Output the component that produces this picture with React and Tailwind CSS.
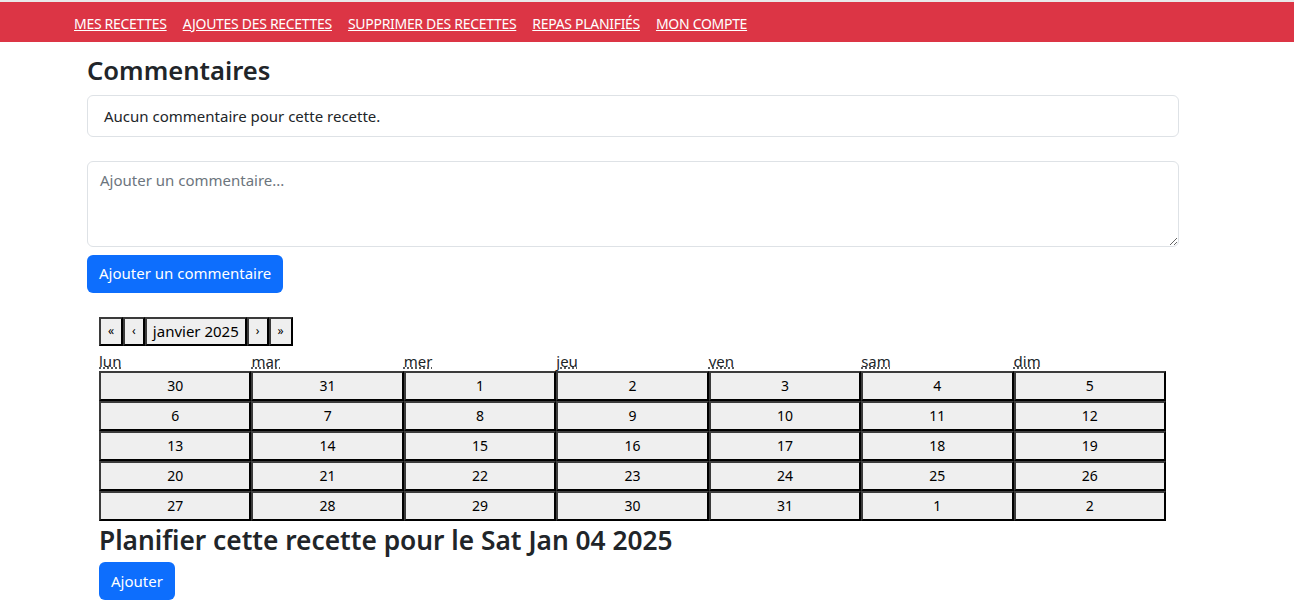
import React, { useState } from 'react';

const navLinks = ['MES RECETTES', 'AJOUTES DES RECETTES', 'SUPPRIMER DES RECETTES', 'REPAS PLANIFIÉS', 'MON COMPTE'];

const jours = [
  ['lun', 'lundi'],
  ['mar', 'mardi'],
  ['mer', 'mercredi'],
  ['jeu', 'jeudi'],
  ['ven', 'vendredi'],
  ['sam', 'samedi'],
  ['dim', 'dimanche'],
];

// grille de janvier 2025 (commence lundi 30 décembre)
const semaines = [
  [30, 31, 1, 2, 3, 4, 5],
  [6, 7, 8, 9, 10, 11, 12],
  [13, 14, 15, 16, 17, 18, 19],
  [20, 21, 22, 23, 24, 25, 26],
  [27, 28, 29, 30, 31, 1, 2],
];

export default function App() {
  const [commentaire, setCommentaire] = useState('');

  return (
    <div className="min-h-screen bg-white text-[#212529] font-['Noto_Sans','Open_Sans',sans-serif]">
      {/* Navbar */}
      <div className="h-[2px] bg-[#e9e9e9]" />
      <nav className="h-[40px] bg-[#dc3545] flex items-center pl-[74px] gap-[16px] pt-[2px]">
        {navLinks.map((l) => (
          <a key={l} href="#" className="text-white underline text-[14px] tracking-[-0.3px]">
            {l}
          </a>
        ))}
      </nav>

      <div className="ml-[87px] w-[1092px]">
        <h3 className="text-[25.6px] font-semibold leading-[1.2] mt-[14px] mb-[8px]">Commentaires</h3>

        <div className="border border-[#dee2e6] rounded-[6px] px-[16px] py-[8px] text-[15px] leading-[24px]">
          Aucun commentaire pour cette recette.
        </div>

        <textarea
          value={commentaire}
          onChange={(e) => setCommentaire(e.target.value)}
          placeholder="Ajouter un commentaire..."
          className="block mt-[24px] w-full h-[86px] border border-[#dee2e6] rounded-[6px] px-[12px] pt-[6px] pb-[8px] text-[15px] leading-[24px] placeholder:text-[#6c757d] outline-none"
        />

        <button className="mt-[8px] h-[38px] px-[12px] bg-[#0d6efd] text-white rounded-[6px] text-[15px]">
          Ajouter un commentaire
        </button>

        {/* Calendrier */}
        <div className="ml-[12px] mt-[24px] w-[1067px] text-[15px]">
          <div className="flex h-[29px]">
            {['«', '‹', 'janvier 2025', '›', '»'].map((b, i) => (
              <button
                key={i}
                className={`bg-[#efefef] border-2 border-[#3b3b3b] border-b-black border-r-black leading-none text-black ${
                  i === 2 ? 'px-[6px] text-[15px]' : 'px-[7px] text-[12px]'
                }`}
              >
                {b}
              </button>
            ))}
          </div>
          <div className="grid grid-cols-7 mt-[4px] h-[21px]">
            {jours.map(([a, t]) => (
              <div key={a} className="leading-[22px]">
                <abbr title={t} className="underline decoration-dotted">
                  {a}
                </abbr>
              </div>
            ))}
          </div>
          <div className="grid grid-cols-7">
            {semaines.flat().map((d, i) => (
              <button
                key={i}
                className="h-[30px] bg-[#efefef] border-2 border-[#3b3b3b] border-b-black border-r-black text-[14px] text-black"
              >
                {d}
              </button>
            ))}
          </div>

          <h3 className="text-[26.3px] font-semibold leading-[1.2] mt-[4px] mb-[6px]">
            Planifier cette recette pour le Sat Jan 04 2025
          </h3>
          <button className="h-[38px] px-[12px] bg-[#0d6efd] text-white rounded-[6px] text-[15px]">Ajouter</button>
        </div>
      </div>
    </div>
  );
}
